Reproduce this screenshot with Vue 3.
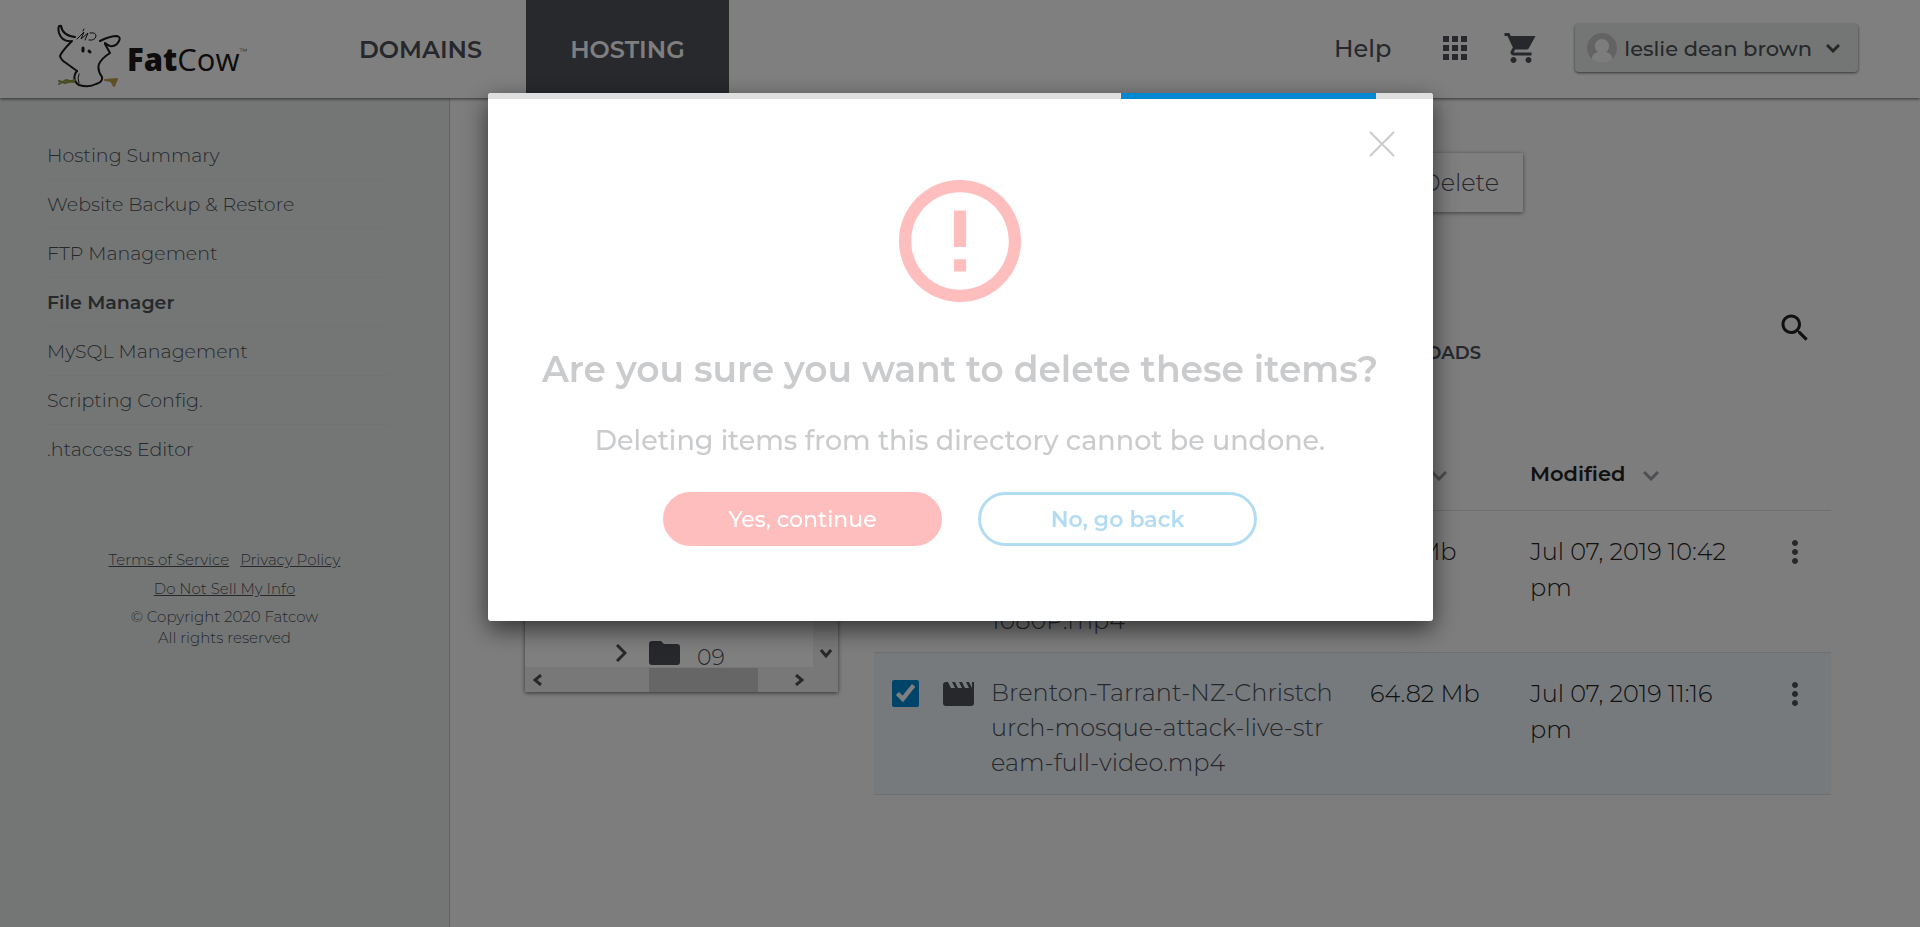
<script setup>
    import { ref } from 'vue';

    const menu = [
        "Hosting Summary",
        "Website Backup & Restore",
        "FTP Management",
        "File Manager",
        "MySQL Management",
        "Scripting Config.",
        ".htaccess Editor"
    ];
    const active = ref("File Manager");

    const files = ref([
        {
            id: 1,
            name: ["", "", "1080P.mp4"],
            size: "9.21 Mb",
            modified: ["Jul 07, 2019 10:42", "pm"],
            checked: false
        },
        {
            id: 2,
            name: ["Brenton-Tarrant-NZ-Christch", "urch-mosque-attack-live-str", "eam-full-video.mp4"],
            size: "64.82 Mb",
            modified: ["Jul 07, 2019 11:16", "pm"],
            checked: true
        }
    ]);

    const showModal = ref(true);

    const closeModal = () => {
        showModal.value = false;
    }

    const deleteItems = () => {
        files.value = files.value.filter((file) => !file.checked);
        closeModal();
    }
</script>

<template>
  <div class="page">
    <header class="header">
        <a class="logo" href="#">
            <svg class="logo__cow" viewBox="0 0 64 64" fill="none" stroke="#1c1818" stroke-width="2" stroke-linecap="round" stroke-linejoin="round">
                <path d="M4 2C1 1 1 5 2 9C4 15 8 18 15 17C11 21 5 27 3 32Q4 36 9 39L20 47" />
                <path d="M4 2C5 8 10 12 18 13" />
                <path d="M20 47C15 52 18 59 22 61Q32 64 39 60Q46 58 45 53Q40 46 42 40Q45 34 53 29L48 20" />
                <path d="M43 17Q53 12 60 12Q64 13 62 17Q59 23 53 22Q50 21 48 19" />
                <path d="M22 50Q20 54 22 59M20 15L27 8L24 15L31 9L28 16M33 9Q39 8 39 12Q38 17 32 16M26 7L27 5" stroke-width="1" />
                <path d="M26 24V27M32 27L33 28" stroke-width="3" />
                <path d="M2 57L8 59L18 56M2 60L9 56L17 58" stroke="#8f9640" />
                <path d="M48 56L60 55L57 62L54 57Z" fill="#c0a04c" stroke="#c0a04c" />
            </svg>
            <span class="logo__text"><b>Fat</b>Cow</span>
            <span class="logo__tm">™</span>
        </a>
        <nav class="nav">
            <a class="nav__item" href="#">DOMAINS</a>
            <a class="nav__item nav__item--active" href="#">HOSTING</a>
        </nav>
        <div class="tools">
            <a class="tools__help" href="#">Help</a>
            <button class="icon-btn" type="button" aria-label="Apps">
                <svg class="icon" viewBox="0 0 24 24"><path d="M4 8h4V4H4v4zm6 12h4v-4h-4v4zm-6 0h4v-4H4v4zm0-6h4v-4H4v4zm6 0h4v-4h-4v4zm6-10v4h4V4h-4zm-6 4h4V4h-4v4zm6 6h4v-4h-4v4zm0 6h4v-4h-4v4z" /></svg>
            </button>
            <button class="icon-btn" type="button" aria-label="Cart">
                <svg class="icon" viewBox="0 0 24 24"><path d="M7 18c-1.1 0-1.99.9-1.99 2S5.900 22 7 22s2-.9 2-2-.9-2-2-2zM1 2v2h2l3.600 7.590-1.350 2.450c-.16.28-.25.61-.25.96 0 1.100.9 2 2 2h12v-2H7.420c-.14 0-.25-.11-.25-.25l.03-.12.9-1.630h7.450c.75 0 1.410-.41 1.750-1.030L21.700 4H5.210l-.94-2H1zm16 16c-1.100 0-1.990.9-1.990 2s.89 2 1.990 2 2-.9 2-2-.9-2-2-2z" /></svg>
            </button>
            <button class="user" type="button">
                <svg class="user__avatar" viewBox="0 0 30 30">
                    <circle cx="15" cy="15" r="15" fill="#c6c6c6" />
                    <path d="M15 6c4 0 7 3 7 7 0 3-1 4-3 6 4 1 6 3 6 7a15 15 0 0 1-20 0c0-4 2-6 6-7-2-2-3-3-3-6 0-4 3-7 7-7z" fill="#fbfbfb" />
                </svg>
                <span>leslie dean brown</span>
                <svg class="user__arrow" viewBox="0 0 14 9"><path d="M1 1L7 7L13 1" /></svg>
            </button>
        </div>
    </header>

    <div class="body">
        <aside class="sidebar">
            <nav class="menu">
                <a
                    v-for="item in menu"
                    :key="item"
                    class="menu__item"
                    :class="{ 'menu__item--active': item === active }"
                    href="#"
                    @click.prevent="active = item"
                >{{ item }}</a>
            </nav>
            <div class="legal">
                <div class="legal__links">
                    <a href="#">Terms of Service</a>
                    <a href="#">Privacy Policy</a>
                </div>
                <div class="legal__links">
                    <a href="#">Do Not Sell My Info</a>
                </div>
                <div class="legal__copy">© Copyright 2020 Fatcow<br>All rights reserved</div>
            </div>
        </aside>

        <main class="main">
            <div class="toolbar">
                <button class="toolbar__btn" type="button" @click="showModal = true">Delete</button>
            </div>
            <div class="manager">
                <div class="tree">
                    <div class="tree__view">
                        <div class="tree__row">
                            <svg class="tree__arrow" viewBox="0 0 12 18"><path d="M2 1L10 9L2 17" /></svg>
                            <svg class="tree__folder" viewBox="0 0 31 24"><path d="M3 0h9l3 3h13q3 0 3 3v15q0 3-3 3H3q-3 0-3-3V3q0-3 3-3z" /></svg>
                            <span class="tree__name">09</span>
                        </div>
                        <div class="tree__hbar">
                            <svg class="tree__nav" viewBox="0 0 10 12"><path d="M8 1L2 6L8 11" /></svg>
                            <span class="tree__thumb"></span>
                            <svg class="tree__nav" viewBox="0 0 10 12"><path d="M2 1L8 6L2 11" /></svg>
                        </div>
                    </div>
                    <div class="tree__vbar">
                        <svg class="tree__down" viewBox="0 0 12 10"><path d="M1 2L6 8L11 2" /></svg>
                    </div>
                </div>

                <div class="files">
                    <div class="files__top">
                        <a class="files__tab" href="#">UPLOADS</a>
                        <button class="icon-btn files__search" type="button" aria-label="Search">
                            <svg class="icon" viewBox="0 0 24 24"><path d="M15.500 14h-.79l-.28-.27C15.410 12.590 16 11.110 16 9.500 16 5.910 13.090 3 9.500 3S3 5.910 3 9.500 5.910 16 9.500 16c1.610 0 3.090-.59 4.230-1.570l.27.28v.79l5 4.990L20.490 19l-4.990-5zm-6 0C7.010 14 5 11.990 5 9.500S7.010 5 9.500 5 14 7.010 14 9.500 11.990 14 9.500 14z" /></svg>
                        </button>
                    </div>
                    <table class="table">
                        <thead>
                            <tr>
                                <th class="col-check"></th>
                                <th class="col-icon"></th>
                                <th></th>
                                <th class="col-size">Size <svg class="sort" viewBox="0 0 16 10"><path d="M1 1L8 8L15 1" /></svg></th>
                                <th class="col-date">Modified <svg class="sort" viewBox="0 0 16 10"><path d="M1 1L8 8L15 1" /></svg></th>
                                <th class="col-more"></th>
                            </tr>
                        </thead>
                        <tbody>
                            <tr v-for="file in files" :key="file.id" :class="{ selected: file.checked }">
                                <td class="col-check">
                                    <input v-model="file.checked" class="check" type="checkbox" :aria-label="file.name.join('')">
                                </td>
                                <td>
                                    <svg class="clapper" viewBox="0 0 31 24"><path d="M3 0h2l3 6h4L9 0h3l3 6h4l-3-6h3l3 6h4l-3-6h3l3 6V0h2v21q0 3-3 3H3q-3 0-3-3V3q0-3 3-3z" /></svg>
                                </td>
                                <td class="name">
                                    <div v-for="(line, i) in file.name" :key="i" class="name__line">{{ line }}</div>
                                </td>
                                <td>{{ file.size }}</td>
                                <td><div v-for="line in file.modified" :key="line">{{ line }}</div></td>
                                <td>
                                    <button class="icon-btn more" type="button" aria-label="More">
                                        <svg class="icon" viewBox="0 0 24 24"><path d="M12 8c1.100 0 2-.9 2-2s-.9-2-2-2-2 .9-2 2 .9 2 2 2zm0 2c-1.100 0-2 .9-2 2s.9 2 2 2 2-.9 2-2-.9-2-2-2zm0 6c-1.100 0-2 .9-2 2s.9 2 2 2 2-.9 2-2-.9-2-2-2z" /></svg>
                                    </button>
                                </td>
                            </tr>
                        </tbody>
                    </table>
                </div>
            </div>
        </main>
    </div>

    <div v-if="showModal" class="overlay">
        <div class="modal" role="dialog" aria-labelledby="modal-title">
            <div class="modal__progress"><div class="modal__bar"></div></div>
            <button class="modal__close" type="button" aria-label="Close" @click="closeModal">
                <svg viewBox="0 0 26 26"><path d="M1 1L25 25M25 1L1 25" /></svg>
            </button>
            <svg class="modal__icon" viewBox="2 2 20 20"><path d="M11 15h2v2h-2zm0-8h2v6h-2zm.99-5C6.470 2 2 6.480 2 12s4.470 10 9.990 10C17.520 22 22 17.520 22 12S17.520 2 11.990 2zM12 20c-4.420 0-8-3.580-8-8s3.580-8 8-8 8 3.580 8 8-3.580 8-8 8z" /></svg>
            <h2 id="modal-title" class="modal__title">Are you sure you want to delete these items?</h2>
            <p class="modal__text">Deleting items from this directory cannot be undone.</p>
            <div class="modal__actions">
                <button class="btn btn--danger" type="button" @click="deleteItems">Yes, continue</button>
                <button class="btn" type="button" @click="closeModal">No, go back</button>
            </div>
        </div>
    </div>
  </div>
</template>

<style>
    body {
        margin: 0;
    }
</style>

<style scoped>
    * {
        box-sizing: border-box;
    }
    .page {
        display: flex;
        flex-direction: column;
        min-height: 100vh;
        background-color: #fafafa;
        color: #4c5058;
        font-family: Montserrat, Inter, "Open Sans", sans-serif;
        font-size: 24px;
        font-weight: 300;
    }
    a {
        color: inherit;
        text-decoration: none;
    }
    button {
        padding: 0;
        border: none;
        background: none;
        color: inherit;
        font: inherit;
        cursor: pointer;
    }
    svg {
        display: block;
    }

    .header {
        position: relative;
        display: flex;
        height: 98px;
        padding: 0 62px 0 57px;
        background-color: white;
        box-shadow: 0 1px 3px rgba(0, 0, 0, 0.6);
    }
    .logo {
        display: flex;
        width: 258px;
        padding-top: 24px;
        color: #1c1818;
    }
    .logo__cow {
        width: 64px;
        height: 64px;
        margin-right: 6px;
    }
    .logo__text {
        padding-top: 15px;
        font-family: "Open Sans", sans-serif;
        font-size: 31px;
        font-weight: 400;
        line-height: 40px;
    }
    .logo__text b {
        font-weight: 800;
    }
    .logo__tm {
        padding-top: 22px;
        font-size: 8px;
    }
    .nav {
        display: flex;
        font-weight: 600;
    }
    .nav__item {
        padding: 0 44px;
        line-height: 100px;
    }
    .nav__item--active {
        height: 98px;
        background-color: #4e5259;
        color: white;
    }
    .tools {
        display: flex;
        align-items: center;
        margin-left: auto;
        padding-bottom: 2px;
        font-weight: 500;
    }
    .tools__help {
        margin-right: 46px;
    }
    .icon-btn {
        width: 36px;
        height: 36px;
    }
    .icon {
        width: 36px;
        height: 36px;
        fill: currentColor;
    }
    .tools .icon-btn {
        margin-right: 30px;
    }
    .tools .icon-btn + .user {
        margin-left: 6px;
    }
    .user {
        display: flex;
        align-items: center;
        height: 48px;
        padding: 0 18px 0 12px;
        border-radius: 4px;
        background-color: #e9edeb;
        box-shadow: 0 1px 3px rgba(0, 0, 0, 0.6);
        font-size: 21px;
    }
    .user__avatar {
        width: 30px;
        height: 30px;
        margin-right: 7px;
    }
    .user__arrow {
        width: 14px;
        height: 9px;
        margin-left: 14px;
        fill: none;
        stroke: currentColor;
        stroke-width: 3;
    }

    .body {
        display: flex;
        flex: 1;
    }
    .sidebar {
        width: 450px;
        padding: 33px 60px 0 47px;
        border-right: 1px solid #c8c8c8;
        background-color: #e9edeb;
    }
    .menu {
        font-size: 19px;
    }
    .menu__item {
        display: block;
        height: 49px;
        border-bottom: 1px solid #e2e5e4;
        line-height: 49px;
    }
    .menu__item:last-child {
        border-bottom: none;
    }
    .menu__item--active {
        font-weight: 600;
    }
    .legal {
        margin-top: 71px;
        padding-left: 13px;
        font-size: 15px;
        text-align: center;
    }
    .legal__links {
        display: flex;
        justify-content: center;
        gap: 11px;
        line-height: 29px;
    }
    .legal__links a {
        text-decoration: underline;
    }
    .legal__copy {
        padding-top: 3px;
        line-height: 21px;
    }

    .main {
        flex: 1;
        padding: 55px 89px 40px 75px;
    }
    .toolbar {
        display: flex;
        justify-content: flex-end;
        padding-right: 308px;
    }
    .toolbar__btn {
        height: 59px;
        padding: 0 24px;
        background-color: white;
        box-shadow: 0 1px 4px rgba(0, 0, 0, 0.5);
    }
    .manager {
        display: flex;
        gap: 36px;
        margin-top: 98px;
    }
    .tree {
        display: flex;
        width: 313px;
        height: 282px;
        margin-top: 100px;
        background-color: white;
        box-shadow: 0 1px 4px rgba(0, 0, 0, 0.6);
    }
    .tree__view {
        display: flex;
        flex: 1;
        flex-direction: column;
        justify-content: flex-end;
    }
    .tree__row {
        display: flex;
        align-items: center;
        padding: 0 0 2px 90px;
    }
    .tree__arrow {
        width: 12px;
        height: 18px;
        margin-right: 22px;
        fill: none;
        stroke: currentColor;
        stroke-width: 3;
    }
    .tree__folder {
        width: 31px;
        height: 24px;
        margin-right: 17px;
        fill: currentColor;
    }
    .tree__name {
        height: 24px;
        font-size: 22px;
        line-height: 34px;
    }
    .tree__hbar {
        display: flex;
        align-items: center;
        height: 25px;
        padding: 0 9px 0 8px;
        background-color: #f1f1f1;
    }
    .tree__thumb {
        width: 109px;
        height: 24px;
        margin: 0 auto 0 106px;
        background-color: #cdcdcd;
    }
    .tree__nav,
    .tree__down {
        width: 10px;
        height: 12px;
        fill: none;
        stroke: #505050;
        stroke-width: 3;
    }
    .tree__vbar {
        display: flex;
        align-items: flex-end;
        justify-content: center;
        width: 25px;
        padding-bottom: 33px;
        background-color: #f1f1f1;
    }
    .tree__down {
        width: 12px;
    }

    .files {
        flex: 1;
    }
    .files__top {
        display: flex;
        align-items: flex-start;
        justify-content: flex-end;
        height: 130px;
        padding-right: 18px;
    }
    .files__tab {
        margin-right: 296px;
        padding-top: 32px;
        font-size: 18px;
        font-weight: 600;
        line-height: 22px;
    }
    .files__search {
        color: #222222;
    }
    .table {
        width: 100%;
        border-collapse: collapse;
        table-layout: fixed;
        color: #222222;
    }
    th {
        height: 70px;
        padding: 0 0 3px;
        border-bottom: 1px solid #dcdfe0;
        font-size: 21px;
        font-weight: 600;
        text-align: left;
    }
    td {
        height: 142px;
        padding: 23px 0 0;
        border-bottom: 1px solid #dcdfe0;
        line-height: 36px;
        vertical-align: top;
    }
    .selected {
        background-color: #edf5fb;
    }
    .col-check {
        width: 69px;
        padding-left: 18px;
    }
    .col-icon {
        width: 48px;
    }
    .col-size {
        width: 160px;
    }
    .col-date {
        width: 247px;
    }
    .col-more {
        width: 54px;
    }
    .sort {
        display: inline-block;
        width: 16px;
        height: 10px;
        margin-left: 12px;
        fill: none;
        stroke: #9a9ea6;
        stroke-width: 3;
    }
    .name {
        padding-top: 22px;
        color: #4c5058;
    }
    .name__line {
        min-height: 35px;
        line-height: 35px;
    }
    .check {
        display: block;
        width: 27px;
        height: 27px;
        margin: 4px 0 0;
        accent-color: #0088d2;
    }
    .clapper {
        width: 31px;
        height: 24px;
        margin-top: 6px;
        fill: #4c5058;
    }
    .more {
        display: block;
        color: #4c5058;
    }

    .overlay {
        position: fixed;
        inset: 0;
        display: flex;
        align-items: flex-start;
        justify-content: center;
        padding-top: 93px;
        background-color: rgba(0, 0, 0, 0.5);
    }
    .modal {
        position: relative;
        display: flex;
        flex-direction: column;
        align-items: center;
        width: 945px;
        padding-bottom: 75px;
        border-radius: 3px;
        background-color: white;
        box-shadow: 0 8px 24px rgba(0, 0, 0, 0.6);
        color: #cacbcd;
        text-align: center;
        overflow: hidden;
    }
    .modal__progress {
        width: 100%;
        height: 6px;
        background-color: #dedfe0;
    }
    .modal__bar {
        width: 27%;
        height: 6px;
        margin-left: 67%;
        background-color: #0088d2;
    }
    .modal__close {
        position: absolute;
        top: 38px;
        right: 38px;
        width: 26px;
        height: 26px;
        stroke: #cacbcd;
        stroke-width: 2;
    }
    .modal__icon {
        width: 122px;
        height: 122px;
        margin-top: 81px;
        fill: #ffbebe;
    }
    .modal__title {
        margin: 43px 0 0;
        font-size: 36px;
        font-weight: 600;
        line-height: 48px;
    }
    .modal__text {
        margin: 30px 0 0;
        font-size: 27px;
        font-weight: 500;
        line-height: 36px;
    }
    .modal__actions {
        display: flex;
        gap: 36px;
        margin-top: 33px;
    }
    .btn {
        width: 279px;
        height: 54px;
        border: 3px solid #b2dcf3;
        border-radius: 27px;
        color: #b2dcf3;
        font-size: 22px;
        font-weight: 600;
    }
    .btn--danger {
        border-color: #ffbebe;
        background-color: #ffbebe;
        color: white;
        font-weight: 500;
    }
</style>
